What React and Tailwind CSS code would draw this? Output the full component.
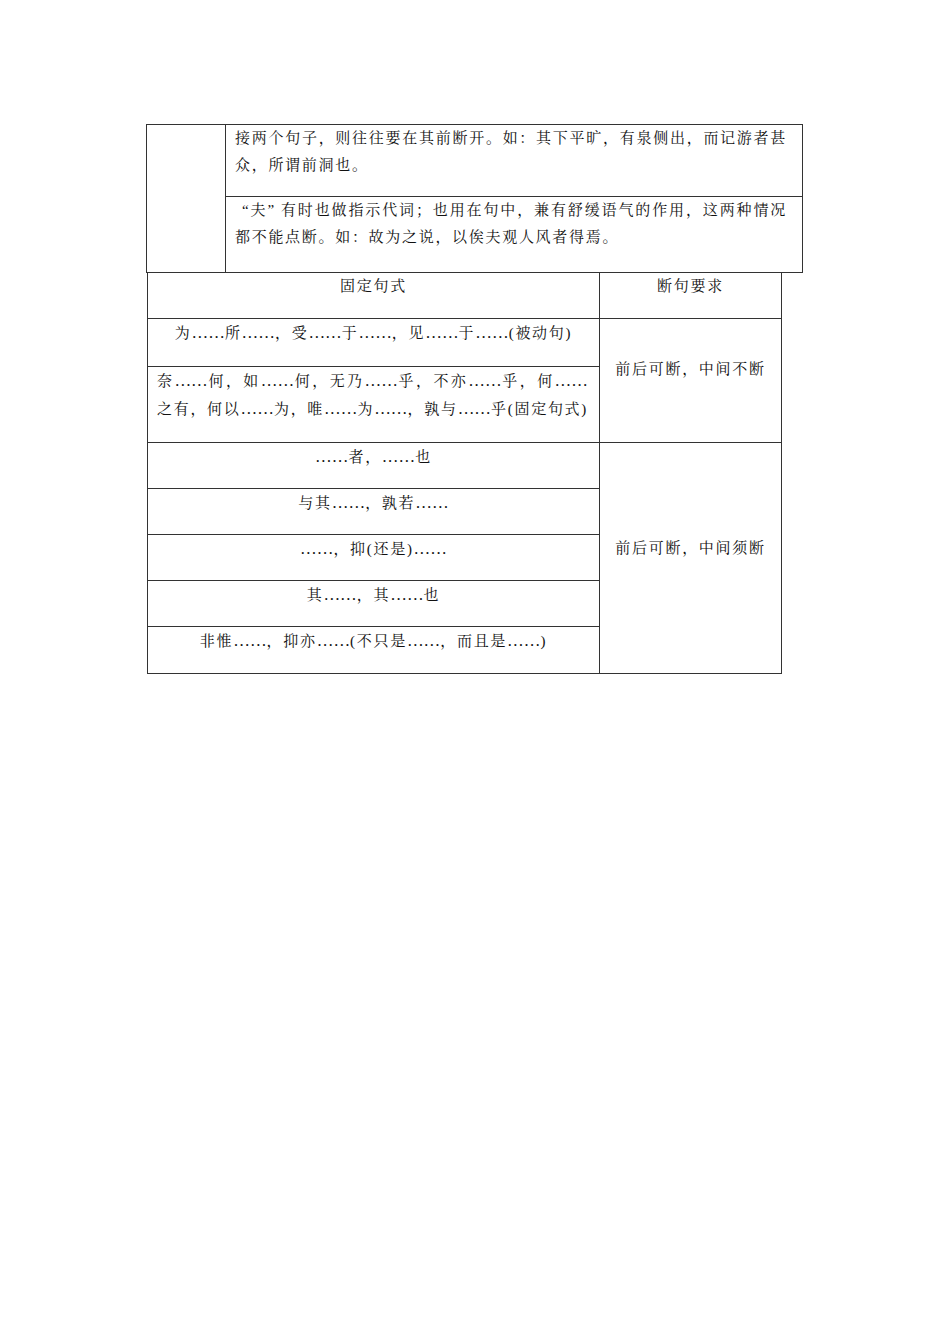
import React from 'react'

// Two stacked bordered tables from a classical-Chinese punctuation handout.
const font = "font-['Liberation_Serif','Noto_Serif_CJK_SC','Noto_Sans_CJK_SC',serif]"

// Ellipsis dots run together without the tracking gap; curly quotes get some room like in Song typefaces.
function T({ s }) {
  const parts = s.split(/(…+|[“”])/)
  return parts.map((p, i) => {
    if (!p) return null
    if (p[0] === '…') return <span key={i} className="text-[16.7px] tracking-normal">{p}</span>
    if (p === '“') return <span key={i} className="ml-[7px]">“</span>
    if (p === '”') return <span key={i} className="mr-[5px]">”</span>
    return <React.Fragment key={i}>{p}</React.Fragment>
  })
}

// A line that is stretched edge to edge (inter-character justification).
function Full({ s }) {
  return <div className="whitespace-nowrap text-justify [text-align-last:justify]"><T s={s} /></div>
}

function Cell({ s, last }) {
  return (
    <div className={`h-[46px] text-center ${last ? '' : 'border-b border-[#333]'}`}><T s={s} /></div>
  )
}

export default function App() {
  const patternsB = [
    '……者，……也',
    '与其……，孰若……',
    '……，抑(还是)……',
    '其……，其……也',
    '非惟……，抑亦……(不只是……，而且是……)',
  ]

  return (
    <div className={`min-h-[1344px] w-[950px] bg-white pt-[124px] pl-[146px] text-[15px] leading-[27px] tracking-[1.7px] text-[#111] ${font}`}>
      {/* upper table: tail of previous section */}
      <div className="flex h-[149px] w-[657px] border border-[#333]">
        <div className="w-[79px] border-r border-[#333]" />
        <div className="flex flex-1 flex-col">
          <div className="h-[72px] border-b border-[#333] pl-[9px] pr-[15px]">
            <Full s="接两个句子，则往往要在其前断开。如：其下平旷，有泉侧出，而记游者甚" />
            <div>众，所谓前洞也。</div>
          </div>
          <div className="flex-1 pl-[9px] pr-[15px]">
            <Full s="“夫”有时也做指示代词；也用在句中，兼有舒缓语气的作用，这两种情况" />
            <div>都不能点断。如：故为之说，以俟夫观人风者得焉。</div>
          </div>
        </div>
      </div>

      {/* fixed sentence patterns */}
      <div className="ml-px w-[635px] border-x border-b border-[#333]">
        <div className="flex h-[46px] border-b border-[#333]">
          <div className="w-[452px] border-r border-[#333] text-center">固定句式</div>
          <div className="flex-1 text-center">断句要求</div>
        </div>

        <div className="flex border-b border-[#333]">
          <div className="w-[452px] border-r border-[#333]">
            <div className="h-[48px] border-b border-[#333] text-center">
              <T s="为……所……，受……于……，见……于……(被动句)" />
            </div>
            <div className="h-[75px] pl-[9px] pr-[11px]">
              <Full s="奈……何，如……何，无乃……乎，不亦……乎，何……" />
              <Full s="之有，何以……为，唯……为……，孰与……乎(固定句式)" />
            </div>
          </div>
          <div className="flex flex-1 items-center justify-center pb-[22px]">前后可断，中间不断</div>
        </div>

        <div className="flex">
          <div className="w-[452px] border-r border-[#333]">
            {patternsB.map((p, i) => (
              <Cell key={p} s={p} last={i === patternsB.length - 1} />
            ))}
          </div>
          <div className="flex flex-1 items-center justify-center pb-[20px]">前后可断，中间须断</div>
        </div>
      </div>
    </div>
  )
}
